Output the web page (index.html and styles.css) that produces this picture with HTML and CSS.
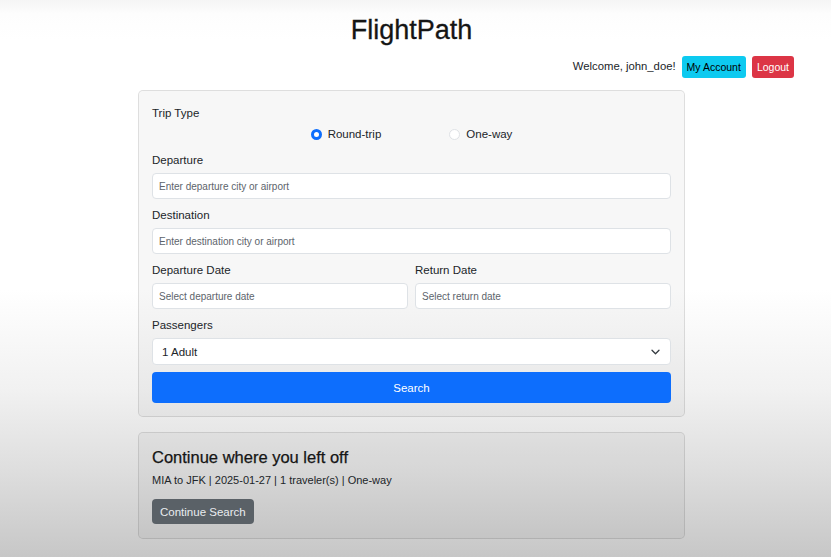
FILE: index.html
```html
<!DOCTYPE html>
<html lang="en">
<head>
<meta charset="utf-8">
<title>FlightPath</title>
<link rel="stylesheet" href="styles.css">
</head>
<body>
<div class="page">
  <header class="header">
    <h1 class="title">FlightPath</h1>
    <div class="userbar">
      <span class="welcome">Welcome, john_doe!</span>
      <button class="btn btn-info">My Account</button>
      <button class="btn btn-danger">Logout</button>
    </div>
  </header>

  <main class="container">
    <form class="card">
      <div class="group">
        <label class="label">Trip Type</label>
        <div class="radios">
          <label class="radio"><span class="dot checked"></span>Round-trip</label>
          <label class="radio"><span class="dot"></span>One-way</label>
        </div>
      </div>
      <div class="group">
        <label class="label">Departure</label>
        <div class="input">Enter departure city or airport</div>
      </div>
      <div class="group">
        <label class="label">Destination</label>
        <div class="input">Enter destination city or airport</div>
      </div>
      <div class="row">
        <div class="group">
          <label class="label">Departure Date</label>
          <div class="input">Select departure date</div>
        </div>
        <div class="group">
          <label class="label">Return Date</label>
          <div class="input">Select return date</div>
        </div>
      </div>
      <div class="group last">
        <label class="label">Passengers</label>
        <div class="select">
          <span>1 Adult</span>
          <svg class="chev" width="9" height="6" viewBox="0 0 9 6"><path d="M1 1.2l3.5 3.5 3.5-3.5" fill="none" stroke="#343a40" stroke-width="1.3" stroke-linecap="round" stroke-linejoin="round"/></svg>
        </div>
      </div>
      <button type="button" class="btn-search">Search</button>
    </form>

    <section class="card resume">
      <h2 class="resume-title">Continue where you left off</h2>
      <p class="resume-text">MIA to JFK | 2025-01-27 | 1 traveler(s) | One-way</p>
      <button class="btn btn-secondary">Continue Search</button>
    </section>
  </main>
</div>
</body>
</html>
```
FILE: styles.css
```css
html {
  height: 100%;
  background: linear-gradient(180deg, #f5f5f5 0px, #fdfdfd 14px, #ffffff 40px, #ffffff 290px, #f1f1f1 390px, #dedede 470px, #c7c7c7 557px);
}
body {
  margin: 0;
  font-family: "Liberation Sans", Arial, sans-serif;
  color: #212529;
}
.page {
  width: 823px;
}
.header {
  display: flex;
  flex-direction: column;
}
.title {
  margin: 13px 0 0;
  text-align: center;
  font-size: 27px;
  font-weight: 400;
  line-height: 34px;
  color: #151515;
  -webkit-text-stroke: 0.3px #151515;
}
.userbar {
  display: flex;
  justify-content: flex-end;
  align-items: center;
  gap: 6px;
  padding-right: 29px;
  margin-top: 9px;
}
.welcome {
  font-size: 11.3px;
  position: relative;
  top: -1px;
}
.btn {
  font-family: inherit;
  border: none;
  border-radius: 3px;
  height: 22px;
  padding: 0 5px;
  font-size: 10.5px;
  cursor: pointer;
}
.btn-info { background: #0dcaf0; color: #000; }
.btn-danger { background: #dc3545; color: #fff; }
.btn-secondary {
  background: #5a6167;
  color: #e9ecef;
  height: 25px;
  padding: 0 8px;
  font-size: 11.5px;
  border-radius: 4px;
}
.container {
  width: 547px;
  margin: 12px auto 0;
  display: flex;
  flex-direction: column;
  gap: 15px;
}
.card {
  box-sizing: border-box;
  border: 1px solid rgba(0,0,0,0.1);
  border-radius: 5px;
  background: rgba(0,0,0,0.03);
  padding: 14px 13px 13px;
  margin: 0;
}
.group {
  display: flex;
  flex-direction: column;
  margin-bottom: 8px;
}
.group.last { margin-bottom: 7px; }
.label {
  font-size: 11.5px;
  line-height: 16px;
  margin-bottom: 5px;
}
.radios {
  display: flex;
  justify-content: center;
  gap: 68px;
  margin-bottom: 2px;
}
.radio {
  display: flex;
  align-items: center;
  gap: 6px;
  font-size: 11.5px;
  line-height: 16px;
}
.dot {
  box-sizing: border-box;
  width: 11px;
  height: 11px;
  border-radius: 50%;
  background: #fff;
  border: 1px solid #dfe2e6;
}
.dot.checked {
  border: 3px solid #0d6efd;
}
.input, .select {
  box-sizing: border-box;
  height: 26px;
  background: #fff;
  border: 1px solid #dee2e6;
  border-radius: 4px;
  padding: 0 6px;
  display: flex;
  align-items: center;
  font-size: 10px;
  color: #5d646b;
}
.select {
  height: 27px;
  padding: 0 10px 0 9px;
  font-size: 11.5px;
  color: #212529;
  justify-content: space-between;
}
.row {
  display: flex;
  gap: 7px;
}
.row .group { flex: 1; }
.btn-search {
  display: block;
  width: 100%;
  height: 31px;
  border: none;
  border-radius: 4px;
  background: #0d6efd;
  color: #fff;
  font-family: inherit;
  font-size: 11.5px;
}
.resume {
  padding: 14px 13px 14px;
}
.resume-title {
  margin: 0;
  font-size: 16.5px;
  font-weight: 400;
  line-height: 20px;
  color: #151515;
  -webkit-text-stroke: 0.25px #151515;
}
.resume-text {
  margin: 5px 0 11px;
  font-size: 11px;
  line-height: 16px;
}
```
